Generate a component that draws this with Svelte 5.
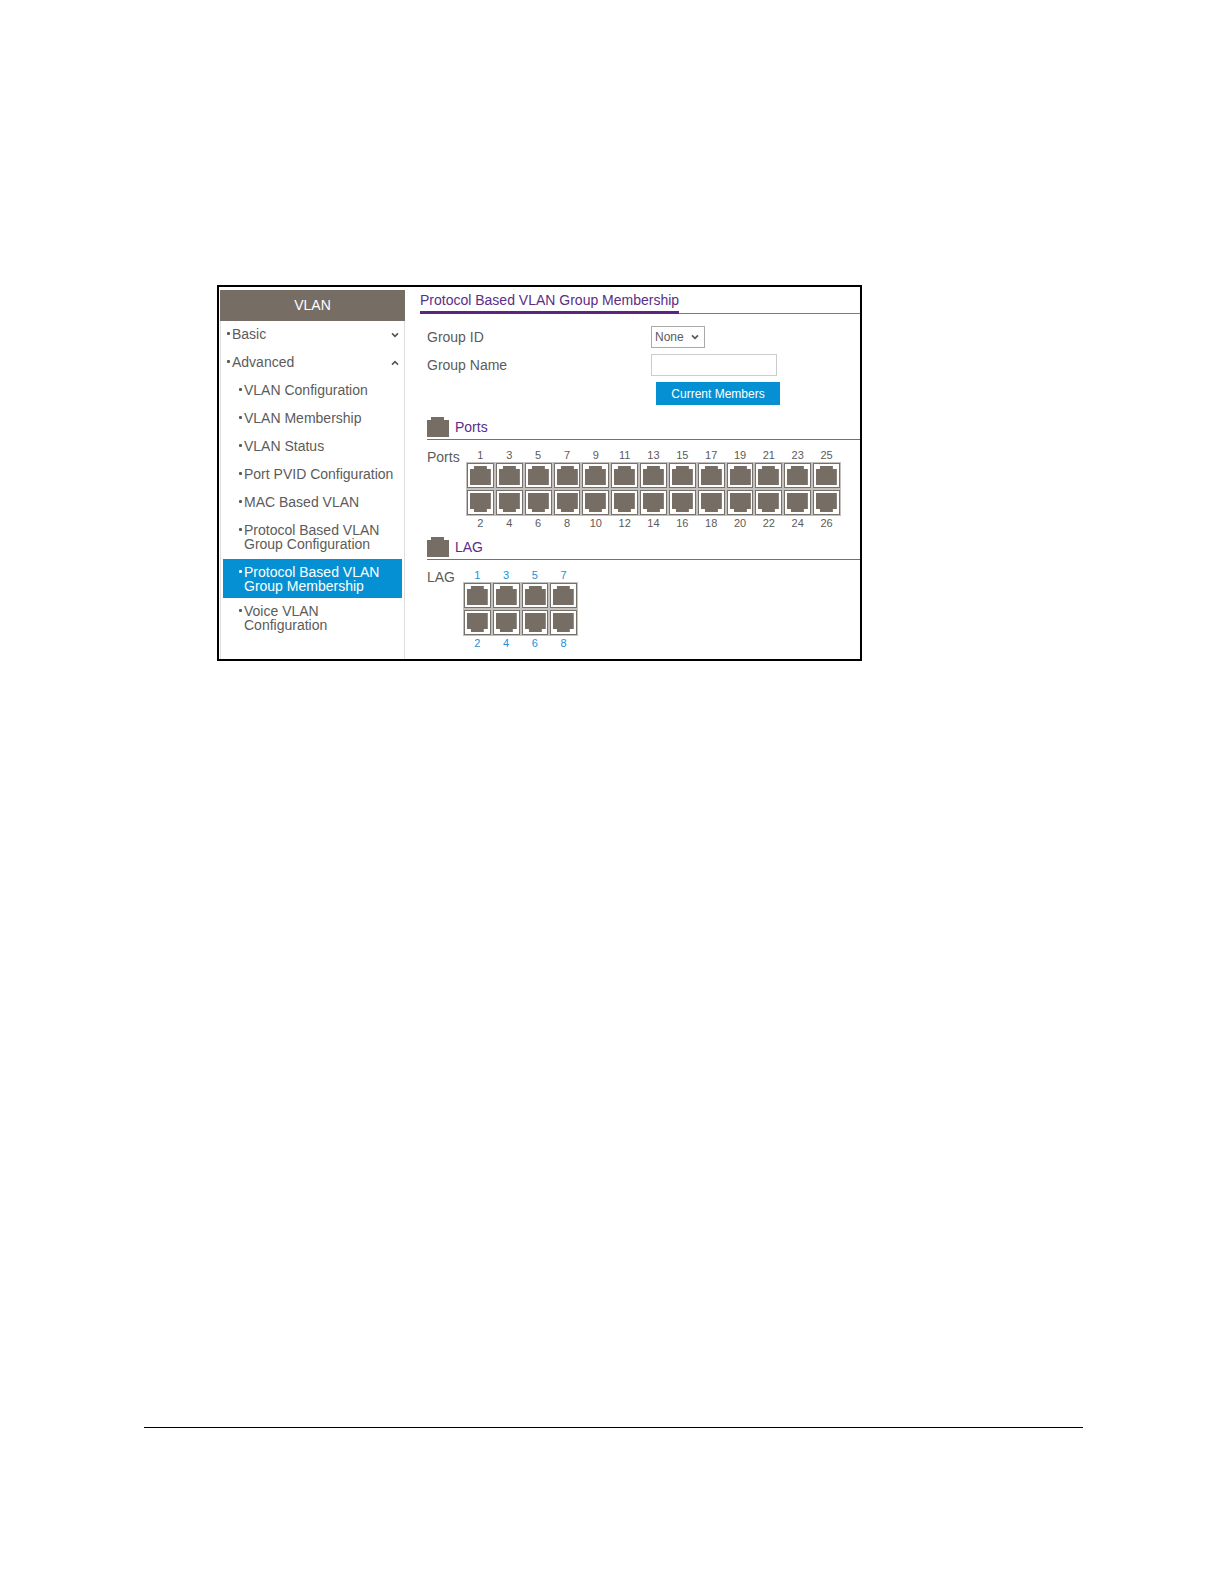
<script>
  let groupId = $state('None');
  let groupName = $state('');
  let basicOpen = $state(false);
  let advancedOpen = $state(true);
  let current = $state('Protocol Based VLAN Group Membership');

  const advancedItems = [
    'VLAN Configuration',
    'VLAN Membership',
    'VLAN Status',
    'Port PVID Configuration',
    'MAC Based VLAN',
    'Protocol Based VLAN Group Configuration',
    'Protocol Based VLAN Group Membership',
    'Voice VLAN Configuration'
  ];

  const sections = [
    { name: 'Ports', columns: 13, kind: 'ports' },
    { name: 'LAG', columns: 4, kind: 'lag' }
  ];

  function select(event, item) {
    event.preventDefault();
    current = item;
  }
</script>

{#snippet chevron(up)}
  <svg class="chevron" viewBox="0 0 8 6" aria-hidden="true">
    <path d={up ? 'M1 4.6 L4 1.6 L7 4.6' : 'M1 1.4 L4 4.4 L7 1.4'} />
  </svg>
{/snippet}

{#snippet port(flipped)}
  <svg class="jack" class:flipped viewBox="0 0 25 23" preserveAspectRatio="none" aria-hidden="true">
    <path d="M2 21 V5 H6 V2 H19 V5 H23 V21 Z" />
  </svg>
{/snippet}

<div class="page">
  <div class="frame">
    <nav class="sidebar">
      <h2>VLAN</h2>
      <ul class="menu">
        <li>
          <button class="group" aria-expanded={basicOpen} onclick={() => (basicOpen = !basicOpen)}>
            <span class="bullet"></span>
            <span class="name">Basic</span>
            {@render chevron(basicOpen)}
          </button>
        </li>
        <li>
          <button class="group" aria-expanded={advancedOpen} onclick={() => (advancedOpen = !advancedOpen)}>
            <span class="bullet"></span>
            <span class="name">Advanced</span>
            {@render chevron(advancedOpen)}
          </button>
          {#if advancedOpen}
            <ul>
              {#each advancedItems as item}
                <li>
                  <a href="#vlan" class:active={item === current} onclick={(e) => select(e, item)}>
                    <span class="bullet"></span>
                    <span class="name">{item}</span>
                  </a>
                </li>
              {/each}
            </ul>
          {/if}
        </li>
      </ul>
    </nav>

    <main>
      <div class="title"><h1>Protocol Based VLAN Group Membership</h1></div>

      <form onsubmit={(e) => e.preventDefault()}>
        <label for="group-id">Group ID</label>
        <div class="select">
          <select id="group-id" bind:value={groupId}>
            <option>None</option>
          </select>
          {@render chevron(false)}
        </div>
        <label for="group-name">Group Name</label>
        <input id="group-name" type="text" bind:value={groupName} />
        <button class="members" type="submit">Current Members</button>
      </form>

      {#each sections as section}
        <section>
          <header>
            <svg class="section-icon" viewBox="0 0 22 20" aria-hidden="true">
              <path d="M0 20 V3 H4 V0 H17 V3 H22 V20 Z" />
            </svg>
            <h3>{section.name}</h3>
          </header>
          <div class="panel">
            <span class="panel-label">{section.name}</span>
            <div class="grid {section.kind}">
              {#each Array(section.columns) as _, i}
                <div class="column">
                  <span class="number">{i * 2 + 1}</span>
                  <button aria-label="{section.name} {i * 2 + 1}">{@render port(false)}</button>
                  <button aria-label="{section.name} {i * 2 + 2}">{@render port(true)}</button>
                  <span class="number">{i * 2 + 2}</span>
                </div>
              {/each}
            </div>
          </div>
        </section>
      {/each}
    </main>
  </div>

  <hr />
</div>

<style>
  :global(body) {
    margin: 0;
    background: #fff;
  }

  .page {
    box-sizing: border-box;
    min-height: 100vh;
    padding: 285px 141px 156px 144px;
    display: flex;
    flex-direction: column;
    font-family: 'Liberation Sans', Arial, sans-serif;
    font-size: 14px;
    line-height: 14px;
    color: #5c5b5a;
  }

  .frame {
    box-sizing: border-box;
    width: 100%;
    max-width: 645px;
    margin-left: 73px;
    border: 2px solid #000;
    display: flex;
  }

  h1,
  h2,
  h3 {
    margin: 0;
    font-size: 14px;
    font-weight: normal;
  }

  button,
  select,
  input {
    margin: 0;
    font-family: inherit;
    color: inherit;
  }

  /* sidebar */
  .sidebar {
    box-sizing: border-box;
    width: 185px;
    flex: none;
    margin: 3px 0 0 1px;
    border: solid #dedede;
    border-width: 0 1px;
  }

  h2 {
    margin: 0 -1px;
    background: #766d65;
    color: #fff;
    line-height: 31px;
    text-align: center;
  }

  ul {
    list-style: none;
    margin: 0;
    padding: 0;
  }

  .group,
  .menu a {
    display: flex;
    align-items: flex-start;
    box-sizing: border-box;
    width: 100%;
    padding: 6px 5px 8px 6px;
    border: 0;
    background: none;
    font-size: 14px;
    line-height: 14px;
    text-align: left;
    color: inherit;
    text-decoration: none;
    cursor: pointer;
  }

  .menu a {
    width: auto;
    margin: 0 2px;
    padding: 6px 8px 8px 16px;
  }

  .menu a.active {
    padding: 6px 8px 5px 16px;
    background: #0490d2;
    color: #fff;
  }

  .bullet {
    flex: none;
    width: 3px;
    height: 3px;
    margin: 5px 2px 0 0;
    border-radius: 1px;
    background: currentColor;
  }

  .name {
    flex: 1;
  }

  .chevron {
    width: 8px;
    height: 6px;
    fill: none;
    stroke: #555;
    stroke-width: 1.6;
  }

  .group .chevron {
    margin-top: 5px;
  }

  /* content */
  main {
    flex: 1;
    min-width: 0;
    padding: 4px 0 2px 15px;
  }

  .title {
    display: flex;
    box-shadow: inset 0 -1px #8e6aa6;
  }

  h1 {
    padding: 2px 0 4px;
    border-bottom: 3px solid #5a2583;
    color: #5a2d86;
  }

  form {
    display: grid;
    grid-template-columns: 224px 1fr;
    justify-items: start;
    align-items: center;
    row-gap: 6px;
    padding: 12px 0 12px 7px;
  }

  .select {
    position: relative;
  }

  select,
  input {
    display: block;
    box-sizing: border-box;
    height: 22px;
    border: 1px solid #aaa;
    border-radius: 0;
    background: #fff;
    font-size: 12px;
  }

  select {
    width: 54px;
    padding: 0 0 0 3px;
    appearance: none;
  }

  .select .chevron {
    position: absolute;
    right: 6px;
    top: 8px;
    pointer-events: none;
  }

  input {
    width: 126px;
    padding: 0 4px;
    border-color: #ccc;
  }

  .members {
    grid-column: 2;
    width: 124px;
    height: 23px;
    margin-left: 5px;
    padding: 0;
    border: 0;
    background: #0490d2;
    color: #fff;
    font-size: 12px;
    cursor: pointer;
  }

  section {
    margin-left: 7px;
  }

  header {
    display: flex;
    align-items: center;
    gap: 6px;
    padding-bottom: 2px;
    border-bottom: 1px solid #77716c;
  }

  .section-icon {
    width: 22px;
    height: 20px;
    fill: #766d65;
  }

  h3 {
    color: #5a2d86;
  }

  .panel {
    display: flex;
    padding: 9px 0 8px;
  }

  .panel-label {
    width: 40px;
    line-height: 16px;
  }

  .grid {
    display: grid;
    column-gap: 2px;
  }

  .ports {
    width: 373px;
    grid-template-columns: repeat(13, 1fr);
  }

  .lag {
    width: 113px;
    margin-left: -3px;
    grid-template-columns: repeat(4, 1fr);
    color: #1a8fd8;
  }

  .column {
    display: flex;
    flex-direction: column;
    row-gap: 2px;
  }

  .number {
    font-size: 11px;
    line-height: 12px;
    text-align: center;
  }

  .column button {
    box-sizing: border-box;
    height: 25px;
    padding: 0;
    border: 1px solid #77716c;
    background: #fff;
    box-shadow: 0 0 0 1px #c4c0bd;
    cursor: pointer;
  }

  .jack {
    display: block;
    width: 100%;
    height: 100%;
    fill: #766d65;
  }

  .flipped {
    transform: scaleY(-1);
  }

  hr {
    width: 100%;
    margin: auto 0 0;
    border: 0;
    border-top: 1px solid #000;
  }
</style>
